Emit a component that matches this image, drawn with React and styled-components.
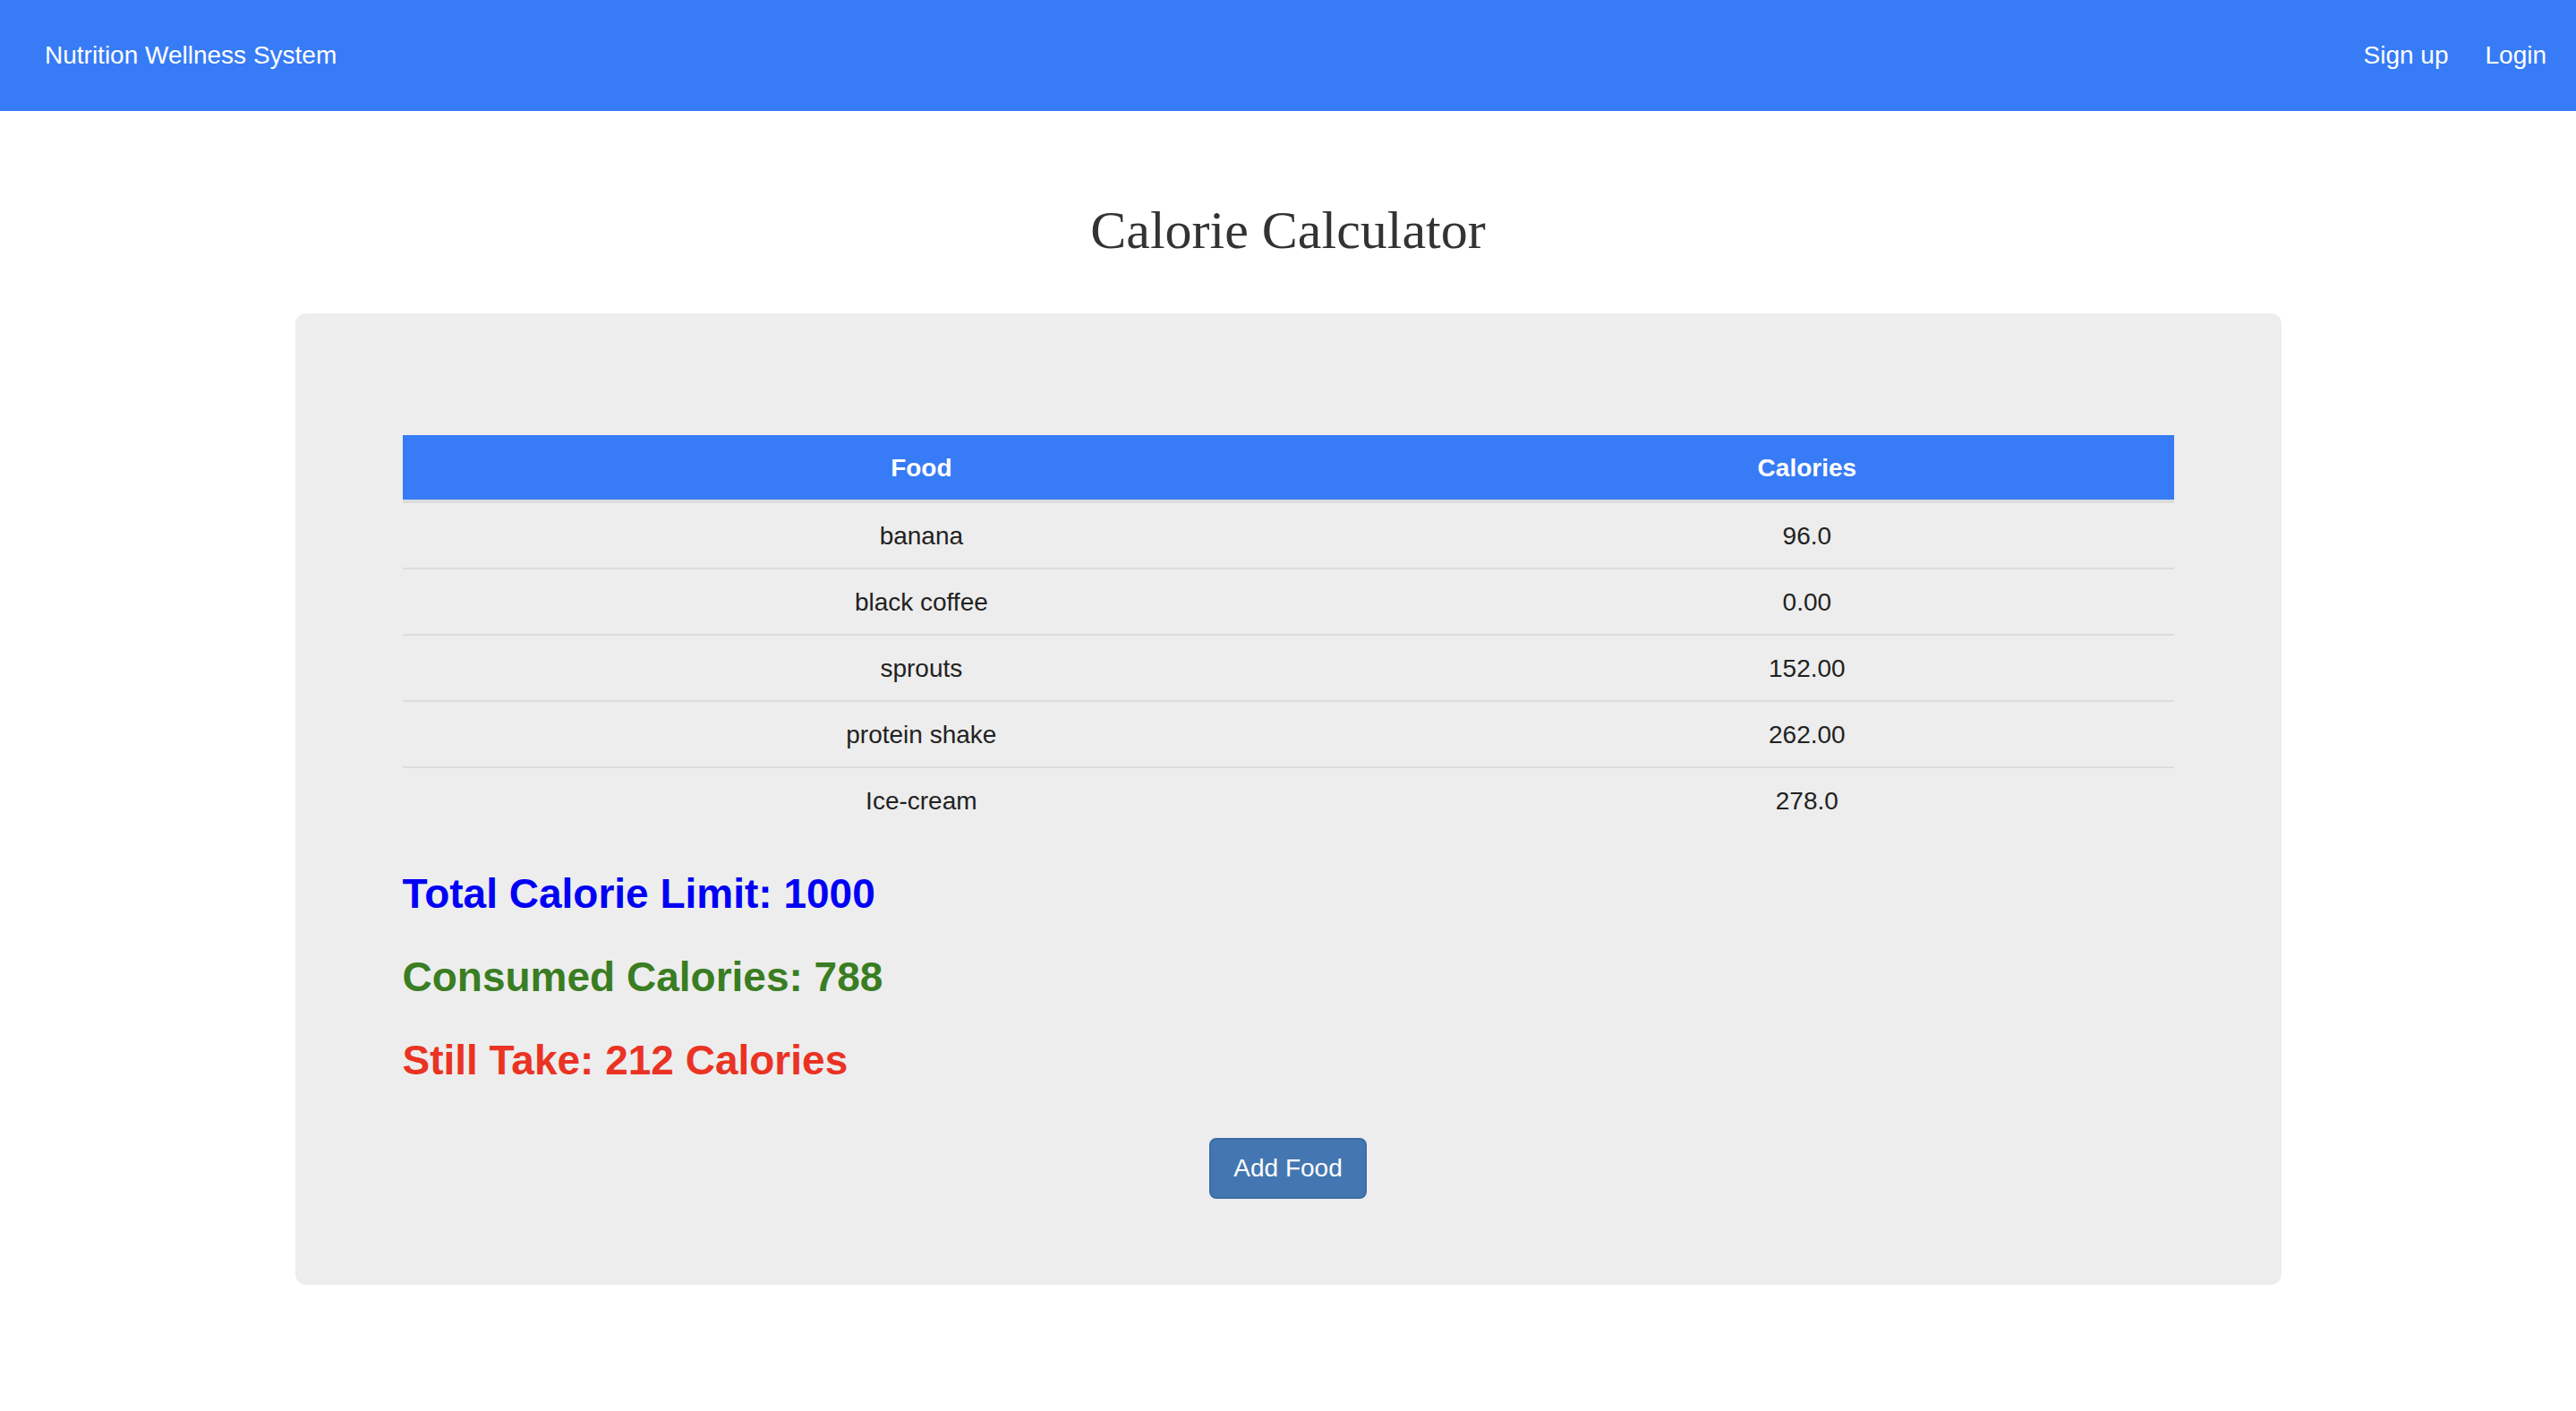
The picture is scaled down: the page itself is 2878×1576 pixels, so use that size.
import React from "react";
import styled, { createGlobalStyle } from "styled-components";

const GlobalStyle = createGlobalStyle`
  body {
    margin: 0;
    background: #fff;
    font-family: "Liberation Sans", Arial, sans-serif;
    color: #333;
  }
`;

const NavBar = styled.nav`
  height: 124px;
  background: #377bf6;
  display: flex;
  align-items: center;
  justify-content: space-between;
  padding: 0 33px 0 50px;
`;

const Brand = styled.a`
  color: #fff;
  font-size: 28px;
  text-decoration: none;
`;

const NavLinks = styled.div`
  display: flex;
  gap: 41px;
`;

const NavLink = styled.a`
  color: #fff;
  font-size: 28px;
  text-decoration: none;
`;

const Title = styled.h1`
  margin: 100px 0 60px;
  text-align: center;
  font-family: "Liberation Serif", "Times New Roman", serif;
  font-weight: normal;
  font-size: 60px;
  line-height: 66px;
  color: #333;
`;

const Panel = styled.div`
  width: 2219px;
  box-sizing: border-box;
  margin: 0 auto;
  padding: 136px 120px 96px;
  background: #ededed;
  border-radius: 12px;
`;

const Table = styled.table`
  width: 100%;
  border-collapse: collapse;
  margin-bottom: 42px;
  font-size: 28px;
  color: #222;
`;

const HeadCell = styled.th`
  background: #377bf6;
  color: #fff;
  font-weight: bold;
  height: 70px;
  padding: 2px 16px 0;
  border-bottom: 4px solid #dcdcdc;
  width: ${(p) => p.$width};
`;

const Cell = styled.td`
  text-align: center;
  height: 70px;
  padding: 2px 16px 0;
  border-top: ${(p) => (p.$first ? "none" : "2px solid #dcdcdc")};
`;

const Summary = styled.h3`
  margin: 40px 0 20px;
  font-size: 46px;
  line-height: 53px;
  font-weight: bold;
  color: ${(p) => p.$color};
`;

const Actions = styled.div`
  display: flex;
  justify-content: center;
  margin-top: 60px;
`;

const Button = styled.button`
  width: 176px;
  height: 68px;
  background: #4477b1;
  color: #fff;
  border: 2px solid #3b6ca3;
  border-radius: 8px;
  font-family: "Liberation Sans", Arial, sans-serif;
  font-size: 28px;
  cursor: pointer;
`;

const foods = [
  { name: "banana", cal: "96.0" },
  { name: "black coffee", cal: "0.00" },
  { name: "sprouts", cal: "152.00" },
  { name: "protein shake", cal: "262.00" },
  { name: "Ice-cream", cal: "278.0" },
];

export default function App() {
  return (
    <>
      <GlobalStyle />
      <NavBar>
        <Brand href="#">Nutrition Wellness System</Brand>
        <NavLinks>
          <NavLink href="#">Sign up</NavLink>
          <NavLink href="#">Login</NavLink>
        </NavLinks>
      </NavBar>
      <Title>Calorie Calculator</Title>
      <Panel>
        <Table>
          <thead>
            <tr>
              <HeadCell $width="58.6%">Food</HeadCell>
              <HeadCell $width="41.4%">Calories</HeadCell>
            </tr>
          </thead>
          <tbody>
            {foods.map((f, i) => (
              <tr key={f.name}>
                <Cell $first={i === 0}>{f.name}</Cell>
                <Cell $first={i === 0}>{f.cal}</Cell>
              </tr>
            ))}
          </tbody>
        </Table>
        <Summary $color="#0000f5">Total Calorie Limit: 1000</Summary>
        <Summary $color="#3a7d22">Consumed Calories: 788</Summary>
        <Summary $color="#ea3323">Still Take: 212 Calories</Summary>
        <Actions>
          <Button>Add Food</Button>
        </Actions>
      </Panel>
    </>
  );
}
